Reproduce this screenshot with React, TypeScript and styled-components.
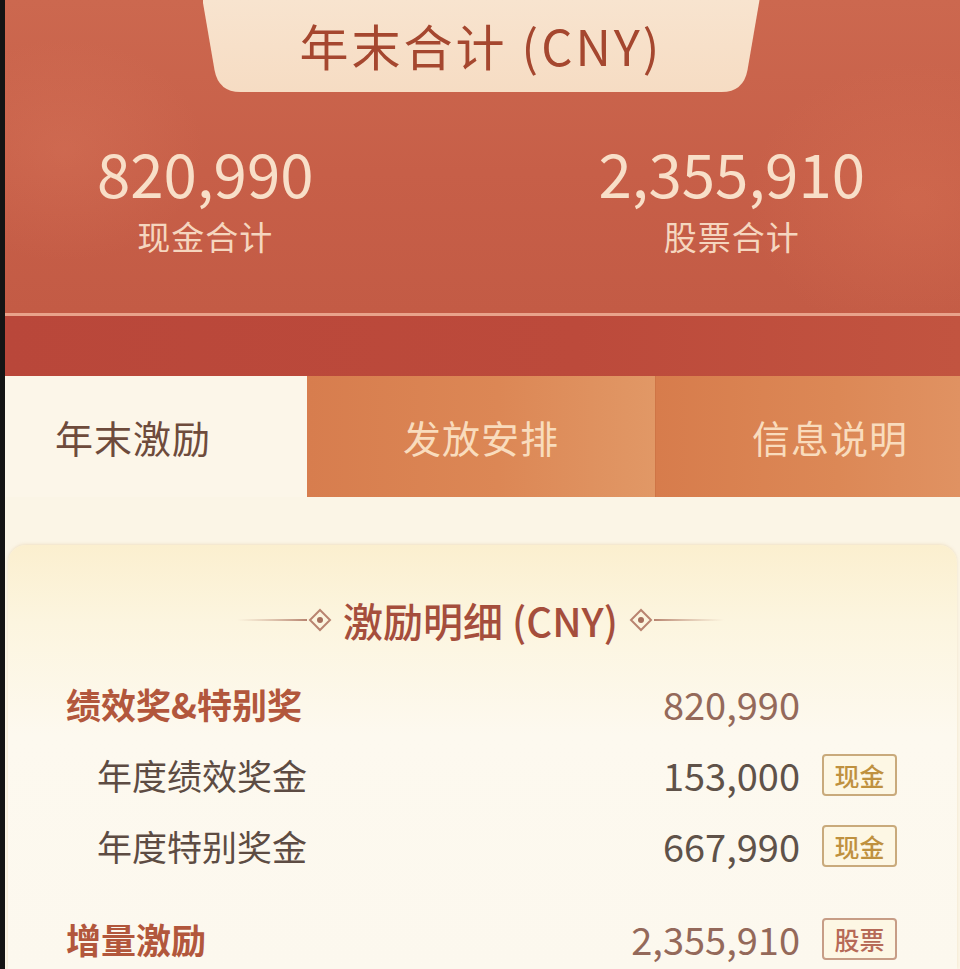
import React from "react";
import styled, { createGlobalStyle } from "styled-components";

const GlobalStyle = createGlobalStyle`
  html, body { margin: 0; padding: 0; background: #121212; }
  body { font-family: "Noto Sans CJK SC", "Noto Sans", sans-serif; overflow: hidden; }
  #root { width: 960px; height: 969px; overflow: hidden; }
`;

const Page = styled.div`
  display: flex;
  width: 960px;
  height: 969px;
`;

const Strip = styled.div`
  width: 5px;
  flex: none;
  background: #141414;
`;

const Main = styled.div`
  flex: 1;
  display: flex;
  flex-direction: column;
  background: #fbf5e6;
  min-width: 0;
  overflow: hidden;
`;

const Hero = styled.header`
  flex: none;
  height: 313px;
  display: flex;
  flex-direction: column;
  align-items: center;
  background:
    radial-gradient(ellipse 200px 160px at 60px 150px, rgba(228, 135, 105, 0.22), transparent 70%),
    radial-gradient(ellipse 240px 200px at 910px 200px, rgba(228, 128, 92, 0.25), transparent 70%),
    linear-gradient(180deg, #cc684f 0%, #c75f48 55%, #c35b45 100%);
  border-bottom: 3px solid #e9a38b;
`;

const TitleTab = styled.div`
  width: 557px;
  height: 92px;
  margin-left: -3px;
  display: flex;
  align-items: center;
  justify-content: center;
  background: linear-gradient(180deg, #f8e4cf 0%, #f6dcc3 100%);
  clip-path: path("M0,0 H557 L545,70 Q541,92 519,92 H38 Q16,92 12,70 Z");
`;

const TitleText = styled.h1`
  margin: 0 0 4px 0;
  font-size: 49px;
  font-weight: 400;
  letter-spacing: 3px;
  color: #a5472f;
  line-height: 1;
`;

const Totals = styled.div`
  align-self: stretch;
  display: flex;
  justify-content: space-between;
  padding: 0 95px 0 92px;
  margin-top: 50px;
`;

const TotalItem = styled.div`
  display: flex;
  flex-direction: column;
  align-items: center;
`;

const TotalValue = styled.div`
  font-size: 60px;
  line-height: 1;
  font-weight: 400;
  color: #f8dfc8;
`;

const TotalLabel = styled.div`
  margin-top: 18px;
  font-size: 33px;
  line-height: 1;
  letter-spacing: 1px;
  color: #f5d6bf;
`;

const Band = styled.div`
  flex: none;
  height: 60px;
  background: linear-gradient(90deg, #b9473a 0%, #bc4a3b 60%, #c25440 100%);
`;

const Tabs = styled.nav`
  flex: none;
  height: 121px;
  display: grid;
  grid-template-columns: 302px 348px 1fr;
`;

const Tab = styled.div<{ $active?: boolean; $tone?: number }>`
  display: flex;
  align-items: center;
  justify-content: ${(p) => (p.$active ? "flex-start" : "center")};
  padding-left: ${(p) => (p.$active ? "50px" : p.$tone === 2 ? "44px" : "0")};
  font-size: 38px;
  letter-spacing: 1px;
  color: ${(p) => (p.$active ? "#6e4b3c" : "#f9dcbd")};
  background: ${(p) =>
    p.$active
      ? "#fcf6e9"
      : p.$tone === 2
      ? "linear-gradient(90deg, #d77c4c 0%, #dc8856 60%, #e09262 100%)"
      : "linear-gradient(90deg, #d77d4e 0%, #dc8755 55%, #e19866 100%)"};
  border-left: ${(p) => (p.$tone === 2 ? "1px solid #cf7546" : "none")};
`;

const Body = styled.section`
  flex: 1;
  min-height: 0;
  padding: 48px 3px 0 3px;
  background: #fbf5e6;
`;

const Card = styled.div`
  height: 100%;
  box-sizing: border-box;
  border-radius: 18px 18px 0 0;
  background: linear-gradient(180deg, #fbefcf 0%, #fcf5df 18%, #fdf9ef 45%, #fcf8ee 100%);
  box-shadow: 0 -1px 3px rgba(220, 190, 140, 0.35);
  padding: 55px 60px 0 58px;
`;

const SectionTitle = styled.div`
  display: flex;
  align-items: center;
  justify-content: center;
  gap: 10px;
  margin-bottom: 28px;
  margin-left: -2px;
`;

const SectionText = styled.h2`
  margin: 0;
  font-size: 40px;
  font-weight: 500;
  line-height: 1;
  color: #a54e3c;
`;

const Row = styled.div<{ $sub?: boolean; $spaced?: boolean }>`
  display: grid;
  grid-template-columns: 1fr auto 75px;
  column-gap: 22px;
  align-items: center;
  height: 71px;
  margin-top: ${(p) => (p.$spaced ? "22px" : "0")};
  padding-left: ${(p) => (p.$sub ? "31px" : "0")};
`;

const Label = styled.div<{ $strong?: boolean }>`
  font-size: 35px;
  line-height: 1;
  font-weight: ${(p) => (p.$strong ? 700 : 400)};
  color: ${(p) => (p.$strong ? "#b2573c" : "#5d4c43")};
`;

const Value = styled.div<{ $strong?: boolean }>`
  font-size: 38px;
  line-height: 1;
  text-align: right;
  color: ${(p) => (p.$strong ? "#94695a" : "#5f5249")};
`;

const Badge = styled.div<{ $kind: "cash" | "stock" }>`
  height: 42px;
  box-sizing: border-box;
  display: flex;
  align-items: center;
  justify-content: center;
  border: 2px solid ${(p) => (p.$kind === "cash" ? "#c9aa7c" : "#c79d86")};
  border-radius: 4px;
  background: #fdf7e4;
  font-size: 25px;
  font-weight: 500;
  color: ${(p) => (p.$kind === "cash" ? "#bf913f" : "#b66a57")};
`;

const Ornament: React.FC<{ flip?: boolean }> = ({ flip }) => (
  <svg
    width="96"
    height="26"
    viewBox="0 0 96 26"
    style={{ transform: flip ? "scaleX(-1)" : undefined }}
  >
    <defs>
      <linearGradient id={flip ? "ornR" : "ornL"} x1="0" x2="1">
        <stop offset="0" stopColor="#c9a08a" stopOpacity="0" />
        <stop offset="1" stopColor="#b07864" />
      </linearGradient>
    </defs>
    <rect x="0" y="12.1" width="70" height="1.8" fill={`url(#${flip ? "ornR" : "ornL"})`} />
    <path d="M83 3 L93 13 L83 23 L73 13 Z" fill="none" stroke="#b98470" strokeWidth="2" />
    <circle cx="83" cy="13" r="3" fill="#a66e5c" />
  </svg>
);

export default function App() {
  return (
    <>
      <GlobalStyle />
      <Page>
        <Strip />
        <Main>
          <Hero>
            <TitleTab>
              <TitleText>年末合计 (CNY)</TitleText>
            </TitleTab>
            <Totals>
              <TotalItem>
                <TotalValue>820,990</TotalValue>
                <TotalLabel>现金合计</TotalLabel>
              </TotalItem>
              <TotalItem>
                <TotalValue>2,355,910</TotalValue>
                <TotalLabel>股票合计</TotalLabel>
              </TotalItem>
            </Totals>
          </Hero>
          <Band />
          <Tabs>
            <Tab $active>年末激励</Tab>
            <Tab $tone={1}>发放安排</Tab>
            <Tab $tone={2}>信息说明</Tab>
          </Tabs>
          <Body>
            <Card>
              <SectionTitle>
                <Ornament />
                <SectionText>激励明细 (CNY)</SectionText>
                <Ornament flip />
              </SectionTitle>
              <Row>
                <Label $strong>绩效奖&amp;特别奖</Label>
                <Value $strong>820,990</Value>
                <span />
              </Row>
              <Row $sub>
                <Label>年度绩效奖金</Label>
                <Value>153,000</Value>
                <Badge $kind="cash">现金</Badge>
              </Row>
              <Row $sub>
                <Label>年度特别奖金</Label>
                <Value>667,990</Value>
                <Badge $kind="cash">现金</Badge>
              </Row>
              <Row $spaced>
                <Label $strong>增量激励</Label>
                <Value $strong>2,355,910</Value>
                <Badge $kind="stock">股票</Badge>
              </Row>
            </Card>
          </Body>
        </Main>
      </Page>
    </>
  );
}
